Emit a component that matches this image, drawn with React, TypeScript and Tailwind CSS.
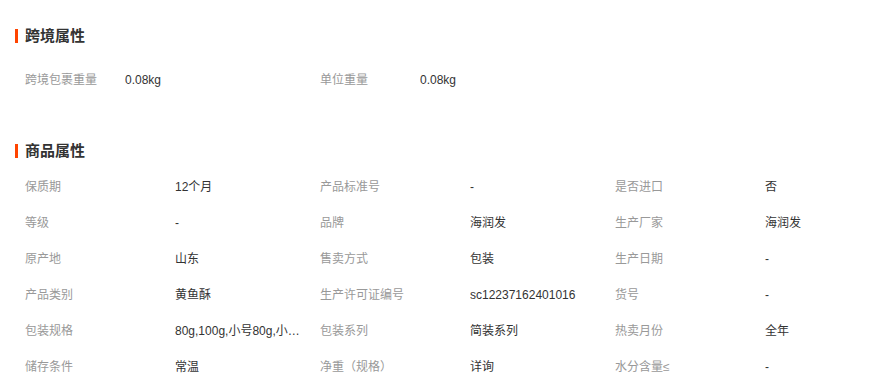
type Attr = { label: string; value: string };

const crossBorder: Attr[] = [
  { label: '跨境包裹重量', value: '0.08kg' },
  { label: '单位重量', value: '0.08kg' },
];

const goods: Attr[] = [
  { label: '保质期', value: '12个月' },
  { label: '产品标准号', value: '-' },
  { label: '是否进口', value: '否' },
  { label: '等级', value: '-' },
  { label: '品牌', value: '海润发' },
  { label: '生产厂家', value: '海润发' },
  { label: '原产地', value: '山东' },
  { label: '售卖方式', value: '包装' },
  { label: '生产日期', value: '-' },
  { label: '产品类别', value: '黄鱼酥' },
  { label: '生产许可证编号', value: 'sc12237162401016' },
  { label: '货号', value: '-' },
  { label: '包装规格', value: '80g,100g,小号80g,小号100g,大号80g' },
  { label: '包装系列', value: '简装系列' },
  { label: '热卖月份', value: '全年' },
  { label: '储存条件', value: '常温' },
  { label: '净重（规格）', value: '详询' },
  { label: '水分含量≤', value: '-' },
];

function SectionTitle({ children }: { children: string }) {
  return (
    <div className="flex h-5 items-center gap-[7px]">
      <span className="h-[14px] w-[3px] bg-[#ff4400]" />
      <h3 className="text-[15px] font-bold leading-5 text-[#333]">{children}</h3>
    </div>
  );
}

function AttrCell({ item, labelWidth }: { item: Attr; labelWidth: string }) {
  return (
    <div className="flex h-9 w-[295px] items-center text-xs leading-9">
      <span className={`${labelWidth} shrink-0 text-[#999]`}>{item.label}</span>
      <span className="w-[132px] truncate text-[#333]">{item.value}</span>
    </div>
  );
}

export default function App() {
  return (
    <div
      className="h-[385px] w-[873px] overflow-hidden bg-white pl-[15px] pt-[26px]"
      style={{ fontFamily: '"Liberation Sans", "Noto Sans CJK SC", sans-serif' }}
    >
      <section>
        <SectionTitle>跨境属性</SectionTitle>
        <div className="mt-[16px] flex pl-[10px]">
          {crossBorder.map((item) => (
            <AttrCell key={item.label} item={item} labelWidth="w-[100px]" />
          ))}
        </div>
      </section>

      <section className="mt-[43px]">
        <SectionTitle>商品属性</SectionTitle>
        <div className="mt-[8px] grid grid-cols-[295px_295px_295px] pl-[10px]">
          {goods.map((item) => (
            <AttrCell key={item.label} item={item} labelWidth="w-[150px]" />
          ))}
        </div>
      </section>
    </div>
  );
}
